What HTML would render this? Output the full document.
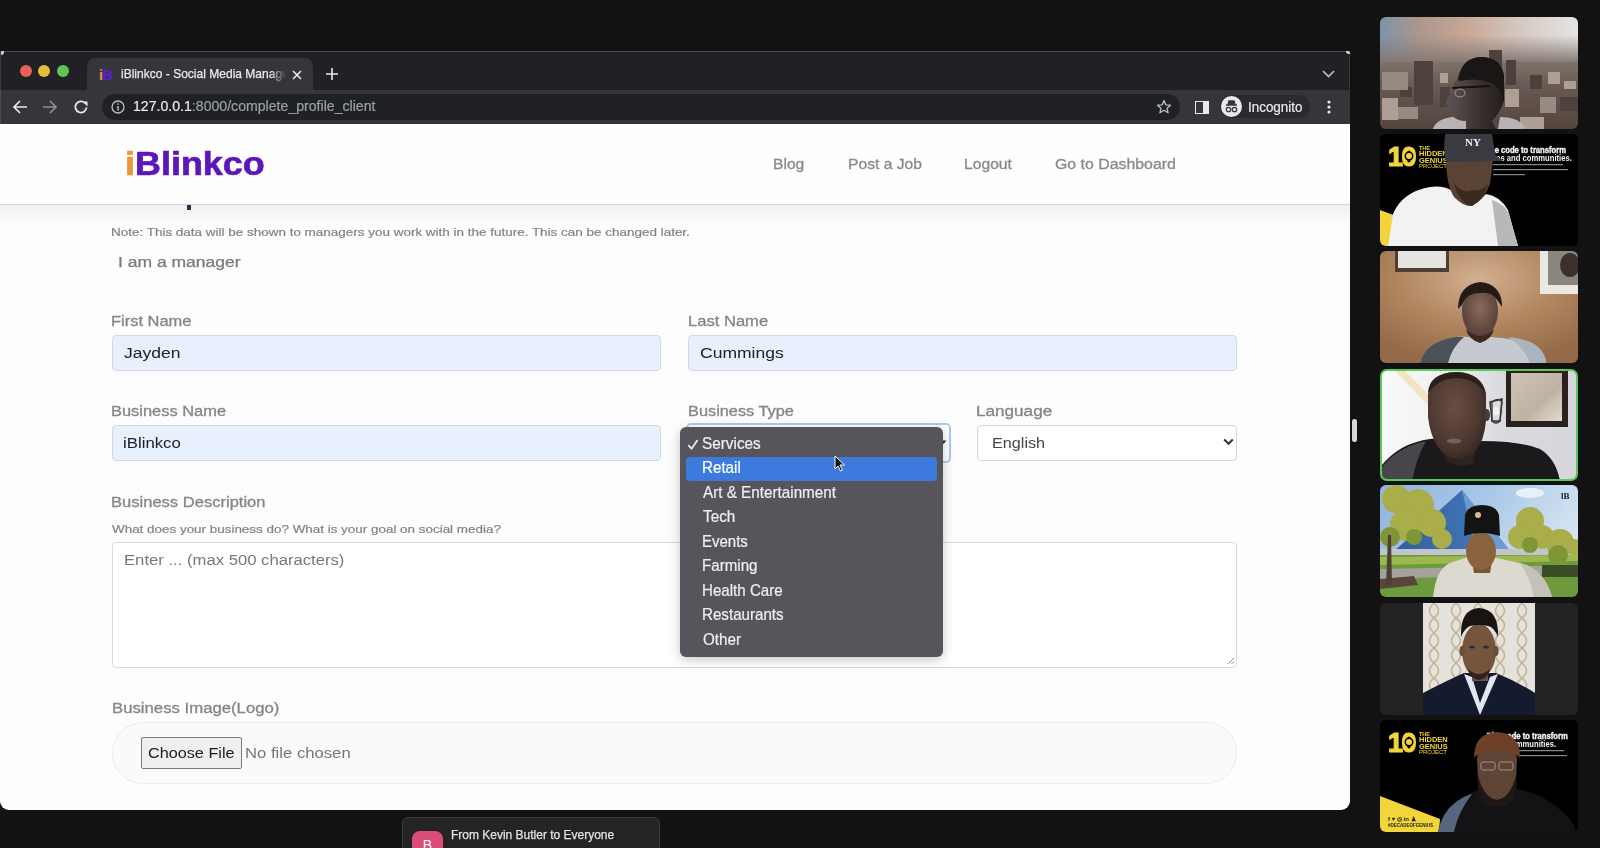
<!DOCTYPE html>
<html><head><meta charset="utf-8">
<style>
*{margin:0;padding:0;box-sizing:border-box;}
html,body{width:1600px;height:848px;overflow:hidden;background:#121212;font-family:"Liberation Sans",sans-serif;}
.abs{position:absolute;}
.t{position:absolute;white-space:nowrap;line-height:1;transform-origin:0 0;}
#win{position:absolute;left:0;top:51px;width:1350px;height:759px;border-radius:0 0 9px 9px;overflow:hidden;background:#fdfdfe;}
#tabbar{position:absolute;left:0;top:0;width:1350px;height:39px;background:#202124;}
#toolbar{position:absolute;left:0;top:39px;width:1350px;height:34px;background:#35363a;}
#tab{position:absolute;left:87px;top:7px;width:226px;height:32px;background:#35363a;border-radius:8px 8px 0 0;}
.light{position:absolute;width:12px;height:12px;border-radius:50%;top:13.5px;}
.inp{position:absolute;background:#e8f0fe;border:1px solid #d3d9e4;border-radius:4px;}
.menu{position:absolute;left:680px;top:427px;width:263px;height:230px;background:#57545b;border-radius:6px;box-shadow:0 3px 12px rgba(0,0,0,.22);}
.thumb{position:absolute;left:1380px;width:198px;height:112px;border-radius:6px;overflow:hidden;}
.thumb svg{position:absolute;left:0;top:0;filter:blur(0.5px);}
</style></head><body>

<div id="win">
  <div id="tabbar">
    <div class="abs" style="left:0;top:0;width:1350px;height:1px;background:#4a4a4f;"></div>
    <div class="abs" style="left:1349px;top:0;width:1px;height:39px;background:#38383c;"></div>
    <div class="abs" style="left:1346px;top:0;width:4px;height:3px;background:#d8d8dc;border-radius:0 2px 0 3px;"></div>
    <div class="abs" style="left:0;top:0;width:4px;height:4px;background:#cfcfd3;border-radius:2px 0 3px 0;"></div>
    <div class="abs" style="left:0;top:0;width:1px;height:39px;background:#3a3a3e;"></div>
    <div class="light" style="left:19.5px;background:#ec5f57;"></div>
    <div class="light" style="left:38px;background:#e9bd3a;"></div>
    <div class="light" style="left:57px;background:#5fc454;"></div>
    <div id="tab">
      <div class="abs" style="left:12px;top:10px;font-size:14px;line-height:1;font-weight:bold;white-space:nowrap;letter-spacing:-0.5px;"><span style="color:#e9953a">i</span><span style="color:#5a1fc0;-webkit-text-stroke:0.6px #5a1fc0;">B</span></div>
      <div class="abs" style="left:34px;top:10px;height:16px;width:165px;overflow:hidden;"><div style="font-size:12.6px;line-height:1.1;color:#e8eaed;white-space:nowrap;transform:scaleX(0.955);transform-origin:0 0;-webkit-text-stroke:0.25px #e8eaed;">iBlinkco - Social Media Manager</div></div>
      <div class="abs" style="left:183px;top:0;width:16px;height:32px;background:linear-gradient(90deg,rgba(53,54,58,0),#35363a);"></div>
      <svg class="abs" style="left:204px;top:11px" width="12" height="12" viewBox="0 0 12 12"><path d="M2 2L10 10M10 2L2 10" stroke="#e8eaed" stroke-width="1.6"/></svg>
    </div>
    <svg class="abs" style="left:325px;top:16px" width="14" height="14" viewBox="0 0 14 14"><path d="M7 1V13M1 7H13" stroke="#e8eaed" stroke-width="1.6"/></svg>
    <svg class="abs" style="left:1322px;top:19px" width="13" height="8" viewBox="0 0 13 8"><path d="M1 1L6.5 6.5L12 1" stroke="#bdc1c6" stroke-width="1.6" fill="none"/></svg>
  </div>
  <div id="toolbar">
    <div class="abs" style="left:0;top:0;width:1px;height:34px;background:#4a4b4f;"></div>
    <svg class="abs" style="left:12px;top:9px" width="16" height="16" viewBox="0 0 16 16"><path d="M15 8H2M8 2L2 8L8 14" stroke="#e8eaed" stroke-width="1.7" fill="none"/></svg>
    <svg class="abs" style="left:42px;top:9px" width="16" height="16" viewBox="0 0 16 16"><path d="M1 8H14M8 2L14 8L8 14" stroke="#8e9094" stroke-width="1.7" fill="none"/></svg>
    <svg class="abs" style="left:73px;top:9px" width="16" height="16" viewBox="0 0 16 16"><path d="M13.5 8.5A5.6 5.6 0 1 1 11.8 3.9" stroke="#e8eaed" stroke-width="1.8" fill="none"/><path d="M9.5 2.5H14.5V7.5Z" fill="#e8eaed"/></svg>
    <div class="abs" style="left:102px;top:4px;width:1078px;height:26px;background:#202124;border-radius:13px;">
      <svg class="abs" style="left:9px;top:6px" width="14" height="14" viewBox="0 0 14 14"><circle cx="7" cy="7" r="6" stroke="#bdc1c6" stroke-width="1.3" fill="none"/><rect x="6.3" y="6" width="1.4" height="4.5" fill="#bdc1c6"/><rect x="6.3" y="3.3" width="1.4" height="1.5" fill="#bdc1c6"/></svg>
      <svg class="abs" style="left:1054px;top:5px" width="16" height="16" viewBox="0 0 16 16"><path d="M8 1.5L9.9 5.9L14.5 6.2L11 9.2L12.1 13.8L8 11.3L3.9 13.8L5 9.2L1.5 6.2L6.1 5.9Z" stroke="#bdc1c6" stroke-width="1.3" fill="none" stroke-linejoin="round"/></svg>
    </div>
    <div class="abs" style="left:1195px;top:10.5px;width:14px;height:13px;border:1.8px solid #e8eaed;"><div style="position:absolute;right:0;top:0;width:5px;height:100%;background:#e8eaed;"></div></div>
    <div class="abs" style="left:1220px;top:5px;width:90px;height:23px;background:#2a2b2e;border-radius:12px;">
      <div class="abs" style="left:1px;top:1px;width:21px;height:21px;border-radius:50%;background:#e8eaed;"></div>
      <svg class="abs" style="left:4px;top:5px" width="15" height="13" viewBox="0 0 15 13"><path d="M2 5H13M4 5L5 1H10L11 5" stroke="#35363a" stroke-width="1.5" fill="#35363a"/><circle cx="4.5" cy="9.5" r="2.2" stroke="#35363a" stroke-width="1.3" fill="none"/><circle cx="10.5" cy="9.5" r="2.2" stroke="#35363a" stroke-width="1.3" fill="none"/></svg>
    </div>
    <svg class="abs" style="left:1326px;top:9px" width="6" height="16" viewBox="0 0 6 16"><circle cx="3" cy="3" r="1.6" fill="#e8eaed"/><circle cx="3" cy="8" r="1.6" fill="#e8eaed"/><circle cx="3" cy="13" r="1.6" fill="#e8eaed"/></svg>
  </div>
  <!-- header -->
  <div class="abs" style="left:0;top:73px;width:1350px;height:81px;background:#fefefe;border-bottom:1px solid #d6d6d9;"></div>
  <div class="abs" style="left:0;top:154px;width:1350px;height:20px;background:linear-gradient(#f0f0f2,#fdfdfe);"></div>
  <div class="abs" style="left:187px;top:154px;width:4px;height:5px;background:#2a2a4a;"></div>
</div>

<!-- form boxes -->
<div class="inp" style="left:112px;top:335px;width:549px;height:36px;"></div>
<div class="inp" style="left:688px;top:335px;width:549px;height:36px;"></div>
<div class="inp" style="left:112px;top:425px;width:549px;height:36px;"></div>
<div class="abs" style="left:686px;top:423px;width:265px;height:40px;border:2px solid #a9c9f5;border-radius:5px;background:#fff;"></div>
<div class="abs" style="left:977px;top:425px;width:260px;height:36px;border:1px solid #d6d6d9;border-radius:4px;background:#fff;"></div>
<svg class="abs" style="left:1223px;top:438px" width="11" height="8" viewBox="0 0 11 8"><path d="M1.2 1.5L5.5 5.8L9.8 1.5" stroke="#333" stroke-width="2" fill="none"/></svg>
<div class="abs" style="left:112px;top:542px;width:1125px;height:126px;border:1px solid #d9d9dc;border-radius:4px;background:#fff;"></div>
<svg class="abs" style="left:1226px;top:656px" width="9" height="9" viewBox="0 0 9 9"><path d="M8 2L2 8M8 5.5L5.5 8" stroke="#888" stroke-width="1"/></svg>
<div class="abs" style="left:112px;top:722px;width:1125px;height:62px;border:1px solid #eeeaec;border-radius:31px;background:#fbfafa;"></div>
<div class="abs" style="left:141px;top:737px;width:101px;height:32px;border:1px solid #7b7b7e;border-radius:2px;background:#efeff1;"></div>

<svg class="abs" style="left:940px;top:440px" width="7" height="5" viewBox="0 0 7 5"><path d="M0.5 0.5L3.5 4L6.5 0.5Z" fill="#333"/></svg>
<!-- dropdown -->
<div class="menu">
  <div class="abs" style="left:6px;top:29.5px;width:251px;height:24.5px;background:#3d7ade;border-radius:4px;"></div>
  <svg class="abs" style="left:7px;top:12px" width="12" height="12" viewBox="0 0 12 12"><path d="M1.8 6.6L4.6 9.8L10.2 1.6" stroke="#f0eff0" stroke-width="1.7" fill="none" stroke-linecap="round" stroke-linejoin="round"/></svg>
</div>
<svg class="abs" style="left:834px;top:455px" width="12" height="17" viewBox="0 0 12 17"><path d="M1 1V14L4 11L6.5 16L8.5 15L6 10H10.5Z" fill="#111" stroke="#fff" stroke-width="1"/></svg>

<!-- scroll handle -->
<div class="abs" style="left:1352px;top:419px;width:4.5px;height:23px;border-radius:3px;background:#d8d8da;"></div>

<!-- chat toast -->
<div class="abs" style="left:402px;top:817px;width:258px;height:40px;background:#242424;border:1px solid #3b3b3b;border-radius:6px;">
  <div class="abs" style="left:9px;top:13px;width:31px;height:31px;background:#d94d78;border-radius:8px;color:#fff;font-size:14px;text-align:center;padding-top:6px;">B</div>
</div>

<span id="logo" class="t" style="left:125.40px;top:147.79px;font-size:32.85px;transform:scaleX(1.0941);color:#5c17b9;font-weight:bold;-webkit-text-stroke:0.7px #5c17b9;"><span style="color:#ec9638;-webkit-text-stroke:0.7px #ec9638">i</span>Blinkco</span>
<span id="nav1" class="t" style="left:773.40px;top:156.79px;font-size:14.07px;transform:scaleX(1.1123);color:#8a898e;-webkit-text-stroke:0.3px #8a898e;">Blog</span>
<span id="nav2" class="t" style="left:847.50px;top:156.79px;font-size:14.07px;transform:scaleX(1.1126);color:#8a898e;-webkit-text-stroke:0.3px #8a898e;">Post a Job</span>
<span id="nav3" class="t" style="left:964.00px;top:156.79px;font-size:14.07px;transform:scaleX(1.1143);color:#8a898e;-webkit-text-stroke:0.3px #8a898e;">Logout</span>
<span id="nav4" class="t" style="left:1055.20px;top:156.79px;font-size:14.07px;transform:scaleX(1.1284);color:#8a898e;-webkit-text-stroke:0.3px #8a898e;">Go to Dashboard</span>
<span id="note" class="t" style="left:111.20px;top:225.67px;font-size:11.61px;transform:scaleX(1.1599);color:#828187;-webkit-text-stroke:0.2px #828187;">Note: This data will be shown to managers you work with in the future. This can be changed later.</span>
<span id="mgr" class="t" style="left:118.00px;top:255.44px;font-size:14.48px;transform:scaleX(1.2103);color:#7a797e;-webkit-text-stroke:0.25px #7a797e;">I am a manager</span>
<span id="l_fn" class="t" style="left:111.20px;top:313.38px;font-size:15.03px;transform:scaleX(1.0954);color:#85848a;-webkit-text-stroke:0.3px #85848a;">First Name</span>
<span id="v_fn" class="t" style="left:124.00px;top:346.36px;font-size:14.35px;transform:scaleX(1.2219);color:#212125;">Jayden</span>
<span id="l_ln" class="t" style="left:688.20px;top:313.38px;font-size:15.03px;transform:scaleX(1.1037);color:#85848a;-webkit-text-stroke:0.3px #85848a;">Last Name</span>
<span id="v_ln" class="t" style="left:699.80px;top:346.36px;font-size:14.35px;transform:scaleX(1.2215);color:#212125;">Cummings</span>
<span id="l_bn" class="t" style="left:111.40px;top:403.38px;font-size:15.03px;transform:scaleX(1.0942);color:#85848a;-webkit-text-stroke:0.3px #85848a;">Business Name</span>
<span id="v_bn" class="t" style="left:123.20px;top:436.36px;font-size:14.35px;transform:scaleX(1.1703);color:#212125;">iBlinkco</span>
<span id="l_bt" class="t" style="left:688.20px;top:403.38px;font-size:15.03px;transform:scaleX(1.0871);color:#85848a;-webkit-text-stroke:0.3px #85848a;">Business Type</span>
<span id="l_lang" class="t" style="left:975.80px;top:403.38px;font-size:15.03px;transform:scaleX(1.1404);color:#85848a;-webkit-text-stroke:0.3px #85848a;">Language</span>
<span id="v_lang" class="t" style="left:992.20px;top:436.36px;font-size:14.35px;transform:scaleX(1.1278);color:#45454a;">English</span>
<span id="l_bd" class="t" style="left:111.40px;top:493.68px;font-size:15.03px;transform:scaleX(1.1020);color:#85848a;-webkit-text-stroke:0.3px #85848a;">Business Description</span>
<span id="h_bd" class="t" style="left:112.40px;top:522.97px;font-size:11.61px;transform:scaleX(1.1566);color:#828187;-webkit-text-stroke:0.2px #828187;">What does your business do? What is your goal on social media?</span>
<span id="ph_bd" class="t" style="left:124.00px;top:552.66px;font-size:14.35px;transform:scaleX(1.1618);color:#78777c;">Enter ... (max 500 characters)</span>
<span id="l_bi" class="t" style="left:111.60px;top:700.48px;font-size:15.03px;transform:scaleX(1.1143);color:#85848a;-webkit-text-stroke:0.3px #85848a;">Business Image(Logo)</span>
<span id="btn_cf" class="t" style="left:148.00px;top:745.76px;font-size:14.35px;transform:scaleX(1.1302);color:#1c1c1f;">Choose File</span>
<span id="nfc" class="t" style="left:245.20px;top:745.76px;font-size:14.35px;transform:scaleX(1.1625);color:#77767b;">No file chosen</span>
<span id="m0" class="t" style="left:701.80px;top:435.97px;font-size:15.99px;transform:scaleX(0.9591);color:#f0eff0;-webkit-text-stroke:0.2px #f0eff0;">Services</span>
<span id="m1" class="t" style="left:701.80px;top:460.42px;font-size:15.99px;transform:scaleX(0.9491);color:#ffffff;-webkit-text-stroke:0.2px #fff;">Retail</span>
<span id="m2" class="t" style="left:702.80px;top:484.87px;font-size:15.99px;transform:scaleX(0.9536);color:#f0eff0;-webkit-text-stroke:0.2px #f0eff0;">Art &amp; Entertainment</span>
<span id="m3" class="t" style="left:702.80px;top:509.32px;font-size:15.99px;transform:scaleX(0.9569);color:#f0eff0;-webkit-text-stroke:0.2px #f0eff0;">Tech</span>
<span id="m4" class="t" style="left:701.80px;top:533.77px;font-size:15.99px;transform:scaleX(0.9377);color:#f0eff0;-webkit-text-stroke:0.2px #f0eff0;">Events</span>
<span id="m5" class="t" style="left:701.80px;top:558.22px;font-size:15.99px;transform:scaleX(0.9475);color:#f0eff0;-webkit-text-stroke:0.2px #f0eff0;">Farming</span>
<span id="m6" class="t" style="left:701.80px;top:582.67px;font-size:15.99px;transform:scaleX(0.9465);color:#f0eff0;-webkit-text-stroke:0.2px #f0eff0;">Health Care</span>
<span id="m7" class="t" style="left:701.80px;top:607.12px;font-size:15.99px;transform:scaleX(0.9471);color:#f0eff0;-webkit-text-stroke:0.2px #f0eff0;">Restaurants</span>
<span id="m8" class="t" style="left:702.80px;top:631.57px;font-size:15.99px;transform:scaleX(0.9500);color:#f0eff0;-webkit-text-stroke:0.2px #f0eff0;">Other</span>
<span id="url" class="t" style="left:132.60px;top:100.19px;font-size:13.95px;transform:scaleX(1.0126);color:#e8eaed;-webkit-text-stroke:0.2px #e8eaed;">127.0.0.1<span style="color:#9aa0a6;-webkit-text-stroke:0.2px #9aa0a6">:8000/complete_profile_client</span></span>
<span id="incog" class="t" style="left:1248.00px;top:100.81px;font-size:13.81px;transform:scaleX(0.9729);color:#e8eaed;-webkit-text-stroke:0.2px #e8eaed;">Incognito</span>
<span id="chat" class="t" style="left:450.60px;top:828.70px;font-size:12.65px;transform:scaleX(0.9478);color:#e4e4e4;-webkit-text-stroke:0.25px #e4e4e4;">From Kevin Butler to Everyone</span>

<!-- thumbnails -->
<!-- T1 city -->
<div class="thumb" style="top:17px;">
<svg width="198" height="112" viewBox="0 0 198 112">
<defs>
<linearGradient id="sky1" x1="0" y1="0" x2="1" y2="0"><stop offset="0" stop-color="#7d93a8"/><stop offset="0.2" stop-color="#ad978c"/><stop offset="0.45" stop-color="#c9a896"/><stop offset="0.7" stop-color="#d4c8bf"/><stop offset="1" stop-color="#e6e4e3"/></linearGradient>
<linearGradient id="haze1" x1="0" y1="0" x2="0" y2="1"><stop offset="0" stop-color="#847a76" stop-opacity="0"/><stop offset="1" stop-color="#857872" stop-opacity="1"/></linearGradient>
<linearGradient id="city1" x1="0" y1="0" x2="0" y2="1"><stop offset="0" stop-color="#7e726b"/><stop offset="0.4" stop-color="#665850"/><stop offset="1" stop-color="#54463f"/></linearGradient>
<linearGradient id="face1" x1="0" y1="0" x2="1" y2="0"><stop offset="0" stop-color="#5e5656"/><stop offset="0.5" stop-color="#3f3634"/><stop offset="1" stop-color="#231d1b"/></linearGradient>
</defs>
<rect width="198" height="112" fill="url(#sky1)"/>
<rect y="18" width="198" height="28" fill="url(#haze1)"/>
<rect y="45" width="198" height="67" fill="url(#city1)"/>
<g fill="#4c413d">
<rect x="34" y="44" width="19" height="44"/><rect x="109" y="33" width="13" height="20"/><rect x="126" y="43" width="10" height="25"/>
<rect x="60" y="70" width="10" height="20"/><rect x="180" y="80" width="18" height="14"/><rect x="150" y="58" width="12" height="14"/>
<rect x="20" y="70" width="12" height="10"/><rect x="100" y="100" width="10" height="12"/>
</g>
<g fill="#ad9f94">
<rect x="2" y="81" width="16" height="22"/><rect x="125" y="72" width="14" height="18"/><rect x="168" y="55" width="12" height="12"/>
<rect x="60" y="56" width="8" height="10"/><rect x="140" y="100" width="24" height="12"/><rect x="184" y="64" width="12" height="8"/>
</g>
<g fill="#978a80">
<rect x="2" y="55" width="26" height="18"/><rect x="18" y="90" width="20" height="12"/><rect x="160" y="80" width="16" height="16"/><rect x="70" y="82" width="10" height="14"/>
</g>
<path d="M53 112 Q56 102 72 100 L86 100 L86 112Z" fill="#b7b4b4"/>
<path d="M120 100 Q140 100 146 112 L118 112Z" fill="#b7b4b4"/>
<path d="M80 58 Q84 40 102 40 Q122 41 124 60 L124 84 Q120 96 112 104 L116 112 L86 112 L86 104 Q76 104 72 98 Q68 94 70 90 Q65 88 66 84 L72 74 L74 66Z" fill="url(#face1)"/>
<path d="M78 62 Q82 40 102 40 Q122 41 124 60 L124 84 Q120 70 112 66 Q96 60 80 64Z" fill="#191615"/>
<path d="M72 71 L110 69" stroke="#121010" stroke-width="1.8"/>
<ellipse cx="80" cy="76" rx="5" ry="4" fill="none" stroke="#9a9ca2" stroke-width="1"/>
<ellipse cx="113" cy="80" rx="3" ry="5" fill="#2e2624"/>
</svg></div>

<!-- T2 hidden genius (NY cap) -->
<div class="thumb" style="top:134px;background:#000;">
<svg width="198" height="112" viewBox="0 0 198 112">
<rect width="198" height="112" fill="#000"/>
<text x="8" y="32" font-family="Liberation Sans" font-weight="bold" font-size="27" fill="#f1d53a" stroke="#f1d53a" stroke-width="1.2" letter-spacing="-1.5">10</text><circle cx="29" cy="22" r="4.5" fill="#000"/><circle cx="29" cy="22" r="3" fill="#f1d53a"/>
<text x="39" y="16" font-family="Liberation Sans" font-weight="bold" font-size="5.5" fill="#f1d53a">THE</text>
<text x="39" y="22" font-family="Liberation Sans" font-weight="bold" font-size="7.5" fill="#f1d53a">HIDDEN</text>
<text x="39" y="28.5" font-family="Liberation Sans" font-weight="bold" font-size="7.5" fill="#f1d53a">GENIUS</text>
<text x="39" y="34" font-family="Liberation Sans" font-size="6" fill="#f1d53a">PROJECT</text>
<text x="110" y="19" font-family="Liberation Sans" font-weight="bold" font-size="9" fill="#f2f2f2" stroke="#f2f2f2" stroke-width="0.4" transform="scale(0.85,1)" transform-origin="110 19">he code to transform</text>
<text x="112" y="27" font-family="Liberation Sans" font-weight="bold" font-size="9" fill="#f2f2f2" transform="scale(0.85,1)" transform-origin="112 27">ves and communities.</text>
<rect x="113" y="30" width="70" height="1.2" fill="#888"/>
<rect x="113" y="35" width="75" height="1.2" fill="#888"/>
<rect x="113" y="40" width="32" height="1.2" fill="#888"/>
<path d="M0 76 L16 82 L16 112 L0 112Z" fill="#f1d53a"/>
<path d="M76 50 L100 50 L104 80 L78 80Z" fill="#6a5040"/>
<path d="M8 112 L13 80 Q22 58 50 53 Q64 51 74 58 Q88 80 106 60 Q120 62 128 76 L138 112Z" fill="#f2f2f2"/>
<path d="M112 66 Q124 70 128 78 L138 112 L118 112Z" fill="#b8b8b8"/>
<path d="M66 24 Q66 50 74 63 Q84 73 92 72 Q104 66 110 50 L113 26Z" fill="#5a4334"/>
<path d="M74 50 Q84 60 92 56 Q102 58 108 50 Q104 66 92 72 Q80 70 74 50Z" fill="#3a2a22"/>
<path d="M65 0 L112 0 Q114 14 116 22 L123 27 L66 28 Q63 18 65 0Z" fill="#3a3b40"/>
<text x="85" y="12" font-family="Liberation Serif" font-weight="bold" font-size="11" fill="#eee">NY</text>
</svg></div>

<!-- T3 wood wall -->
<div class="thumb" style="top:251px;">
<svg width="198" height="112" viewBox="0 0 198 112">
<defs>
<radialGradient id="wood3" cx="0.5" cy="0.25" r="0.75"><stop offset="0" stop-color="#d2b090"/><stop offset="0.55" stop-color="#b0855f"/><stop offset="1" stop-color="#956a48"/></radialGradient>
<radialGradient id="face3" cx="0.5" cy="0.45" r="0.55"><stop offset="0" stop-color="#8a6a58"/><stop offset="1" stop-color="#55403a"/></radialGradient>
</defs>
<rect width="198" height="112" fill="url(#wood3)"/>
<rect x="15" y="-2" width="54" height="23" fill="#4d3d32"/>
<rect x="18" y="-2" width="48" height="19" fill="#e6e4e0"/>
<rect x="160" y="-2" width="40" height="45" fill="#ebe8e4"/>
<rect x="168" y="-2" width="32" height="36" fill="#8b8580"/>
<ellipse cx="190" cy="14" rx="10" ry="12" fill="#3c302a"/>
<path d="M40 112 Q44 96 60 90 Q78 84 88 86 L112 86 Q140 88 158 96 Q166 104 166 112Z" fill="#c6cad0"/>
<path d="M40 112 Q44 96 60 90 Q74 85 84 86 Q72 96 68 112Z" fill="#4b5358"/>
<path d="M128 86 Q150 88 158 96 Q166 104 166 112 L150 112 Q144 96 128 86Z" fill="#a9b4bf"/>
<ellipse cx="100" cy="60" rx="18" ry="26" fill="url(#face3)"/>
<path d="M78 58 Q78 34 100 31 Q122 33 122 56 L118 50 Q112 40 100 42 Q86 42 82 54Z" fill="#241a16"/>
<path d="M86 78 Q100 92 114 78 Q112 88 100 92 Q88 88 86 78Z" fill="#3a2a24"/>
</svg></div>

<!-- T4 active speaker -->
<div class="thumb" style="top:369px;border-radius:7px;background:#5bc85a;">
<div class="abs" style="left:2px;top:2px;width:194px;height:108px;border-radius:5px;overflow:hidden;">
<svg width="194" height="108" viewBox="2 2 194 108">
<defs>
<linearGradient id="wall4" x1="0" y1="0" x2="1" y2="0"><stop offset="0" stop-color="#fafafa"/><stop offset="0.35" stop-color="#f0f0f2"/><stop offset="0.6" stop-color="#d9dade"/><stop offset="1" stop-color="#d6d6dc"/></linearGradient>
<radialGradient id="face4" cx="0.45" cy="0.4" r="0.65"><stop offset="0" stop-color="#6a4e44"/><stop offset="0.7" stop-color="#4c3830"/><stop offset="1" stop-color="#33261f"/></radialGradient>
<linearGradient id="mir4" x1="0" y1="0" x2="1" y2="1"><stop offset="0" stop-color="#cfc5b8"/><stop offset="0.6" stop-color="#bfb2a2"/><stop offset="1" stop-color="#e2dcd4"/></linearGradient>
</defs>
<rect x="0" y="0" width="200" height="112" fill="url(#wall4)"/>
<path d="M15 2 L25 2 L55 32 L48 36Z" fill="#efe0b8" opacity="0.8"/>
<rect x="126" y="2" width="62" height="56" fill="#2a211e"/>
<rect x="131" y="4" width="51" height="48" fill="url(#mir4)"/>
<path d="M110 33 L122 30 L120 52 L112 52Z" fill="none" stroke="#333" stroke-width="1.5"/>
<path d="M2 112 L2 96 Q20 74 50 70 Q70 68 100 72 Q140 72 160 80 Q176 90 180 112Z" fill="#1b191b"/>
<path d="M2 112 L2 98 Q18 78 46 72 Q36 90 32 112Z" fill="#48464a"/>
<path d="M60 70 L96 70 L94 94 Q80 100 66 92Z" fill="#2e2320"/>
<path d="M48 26 Q49 4 76 3 Q103 4 106 26 L106 52 Q104 72 96 82 Q86 90 76 90 Q64 88 58 78 Q50 66 48 48Z" fill="url(#face4)"/>
<path d="M48 24 Q49 4 76 3 Q103 4 106 26 Q98 10 76 9 Q58 10 48 24Z" fill="#2a201c"/>
<ellipse cx="107" cy="46" rx="3" ry="6" fill="#4a3a32"/>
<ellipse cx="74" cy="72" rx="7" ry="2.6" fill="#74625c"/>
<path d="M112 33 Q118 28 122 33 L120 52 Q116 56 112 52Z" fill="none" stroke="#3a3a3a" stroke-width="1.3"/>
<rect x="113" y="38" width="6" height="8" fill="#f2efe8"/>
</svg></div></div>

<!-- T5 pyramid -->
<div class="thumb" style="top:485px;">
<svg width="198" height="112" viewBox="0 0 198 112">
<defs>
<linearGradient id="sky5" x1="0" y1="0" x2="1" y2="0.4"><stop offset="0" stop-color="#8fb4de"/><stop offset="0.5" stop-color="#a9c8e8"/><stop offset="1" stop-color="#d6e4f2"/></linearGradient>
<linearGradient id="pyr5" x1="0" y1="0" x2="1" y2="0"><stop offset="0" stop-color="#2f5e9e"/><stop offset="1" stop-color="#4a7fc0"/></linearGradient>
</defs>
<rect width="198" height="112" fill="url(#sky5)"/>
<ellipse cx="150" cy="8" rx="14" ry="5" fill="#eef3f8" opacity="0.9"/>
<path d="M82 5 L12 68 L130 66Z" fill="url(#pyr5)"/>
<path d="M82 5 L130 66 L96 66 Z" fill="#6b9bd2"/>
<rect x="0" y="64" width="198" height="8" fill="#c2c6ca"/>
<rect x="0" y="70" width="198" height="42" fill="#6d9a3c"/>
<path d="M0 72 L198 70 L198 76 L0 80Z" fill="#9db84e"/>
<path d="M0 84 L198 80 L198 88 L0 94Z" fill="#a3a39c"/>
<path d="M0 94 L34 91 L38 100 L0 104Z" fill="#5a4538"/>
<g fill="#a9ad4a">
<circle cx="16" cy="14" r="14"/><circle cx="38" cy="20" r="16"/><circle cx="52" cy="38" r="14"/><circle cx="26" cy="40" r="16"/><circle cx="62" cy="54" r="10"/>
<circle cx="150" cy="36" r="14"/><circle cx="140" cy="52" r="12"/><circle cx="162" cy="52" r="12"/><circle cx="180" cy="58" r="14"/><circle cx="194" cy="62" r="8"/>
</g>
<g fill="#7f9636">
<circle cx="10" cy="52" r="10"/><circle cx="34" cy="52" r="8"/><circle cx="150" cy="60" r="8"/><circle cx="178" cy="70" r="10"/>
</g>
<path d="M6 100 L8 50 L11 50 L12 100Z" fill="#4e4034"/>
<rect x="162" y="80" width="36" height="12" fill="#3c4c28"/>
<path d="M53 112 Q56 84 70 78 L88 72 Q100 76 112 72 L140 78 Q164 84 172 112Z" fill="#dcd9d0"/>
<path d="M140 78 Q164 84 172 112 L154 112 Q150 92 140 78Z" fill="#c4c1b8"/>
<path d="M92 76 L112 76 L110 88 L94 88Z" fill="#7a5436"/>
<ellipse cx="101" cy="66" rx="15" ry="19" fill="#8a6240"/>
<path d="M84 51 L85 30 Q88 20 102 20 Q116 20 119 30 L120 51 Q110 48 102 48 Q92 48 84 51Z" fill="#131313"/>
<circle cx="98" cy="30" r="3" fill="#d8b890"/>
<text x="181" y="14" font-family="Liberation Serif" font-weight="bold" font-size="9" fill="#222">lB</text>
</svg></div>

<!-- T6 centered video -->
<div class="thumb" style="top:603px;background:#232323;">
<svg width="198" height="112" viewBox="0 0 198 112">
<defs>
<pattern id="trel6" width="22" height="30" patternUnits="userSpaceOnUse" x="43" y="0">
<rect width="22" height="30" fill="#e5e2de"/>
<path d="M11 0 Q2 8 11 15 Q20 22 11 30 M11 0 Q20 8 11 15 Q2 22 11 30" stroke="#c4b494" stroke-width="1.6" fill="none"/>
</pattern>
</defs>
<rect x="43" y="0" width="112" height="112" fill="url(#trel6)"/>
<path d="M43 90 Q66 78 84 70 L116 70 Q136 78 155 90 L155 112 L43 112Z" fill="#141b2e"/>
<path d="M84 71 L100 112 L118 71 L110 74 L100 100 L92 74Z" fill="#e2e6ee"/>
<rect x="92" y="64" width="16" height="14" fill="#6e5040"/>
<ellipse cx="99" cy="48" rx="17" ry="27" fill="#76553f"/>
<ellipse cx="82" cy="48" rx="2.5" ry="5" fill="#6a4c38"/><ellipse cx="116" cy="48" rx="2.5" ry="5" fill="#6a4c38"/>
<path d="M81 34 Q80 6 99 5 Q119 6 118 34 Q114 24 108 23 Q99 21 90 23 Q84 26 81 34Z" fill="#1a1410"/>
<path d="M88 66 Q99 76 110 66 Q108 76 99 77 Q90 76 88 66Z" fill="#2e221a"/>
<ellipse cx="92" cy="44" rx="3" ry="1.6" fill="#2a3040"/><ellipse cx="106" cy="44" rx="3" ry="1.6" fill="#2a3040"/>
</svg></div>

<!-- T7 hidden genius (beanie) -->
<div class="thumb" style="top:720px;background:#000;">
<svg width="198" height="112" viewBox="0 0 198 112">
<rect width="198" height="112" fill="#000"/>
<text x="8" y="32" font-family="Liberation Sans" font-weight="bold" font-size="27" fill="#f1d53a" stroke="#f1d53a" stroke-width="1.2" letter-spacing="-1.5">10</text><circle cx="29" cy="22" r="4.5" fill="#000"/><circle cx="29" cy="22" r="3" fill="#f1d53a"/>
<text x="39" y="16" font-family="Liberation Sans" font-weight="bold" font-size="5.5" fill="#f1d53a">THE</text>
<text x="39" y="22" font-family="Liberation Sans" font-weight="bold" font-size="7.5" fill="#f1d53a">HIDDEN</text>
<text x="39" y="28.5" font-family="Liberation Sans" font-weight="bold" font-size="7.5" fill="#f1d53a">GENIUS</text>
<text x="39" y="34" font-family="Liberation Sans" font-size="6" fill="#f1d53a">PROJECT</text>
<text x="107" y="19" font-family="Liberation Sans" font-weight="bold" font-size="9" fill="#f2f2f2" stroke="#f2f2f2" stroke-width="0.4" transform="scale(0.85,1)" transform-origin="107 19">The code to transform</text>
<text x="120" y="27" font-family="Liberation Sans" font-weight="bold" font-size="9" fill="#f2f2f2" transform="scale(0.85,1)" transform-origin="120 27">d communities.</text>
<rect x="139" y="30" width="45" height="1.2" fill="#888"/>
<rect x="139" y="35" width="48" height="1.2" fill="#888"/>
<path d="M0 76 L60 99 L59 112 L0 112Z" fill="#f1d53a"/>
<text x="8" y="101" font-family="Liberation Sans" font-weight="bold" font-size="6" fill="#222">f ♥ ◎ in ♟</text>
<text x="8" y="107" font-family="Liberation Sans" font-weight="bold" font-size="4.5" fill="#222">#DECADEOFGENIUS</text>
<path d="M58 112 Q62 92 76 82 Q92 70 108 68 L132 68 Q160 72 178 88 Q194 100 196 112Z" fill="#131315"/>
<path d="M58 112 Q62 92 76 82 Q84 76 92 74 Q78 92 74 112Z" fill="#56667e"/>
<path d="M97 40 Q97 24 117 23 Q137 24 137 40 L136 60 Q132 78 117 80 Q102 78 98 60Z" fill="#5d4434"/>
<path d="M98 56 Q104 78 117 80 Q130 78 136 56 Q138 72 132 82 Q117 92 102 82 Q96 72 98 56Z" fill="#1d1816"/>
<path d="M94 38 Q94 13 117 12 Q140 13 140 38 Q136 32 117 30 Q98 32 94 38Z" fill="#6e4028"/>
<rect x="101" y="42" width="14" height="8" rx="2" fill="none" stroke="#a09088" stroke-width="1"/>
<rect x="119" y="42" width="14" height="8" rx="2" fill="none" stroke="#a09088" stroke-width="1"/>
</svg></div>

</body></html>
